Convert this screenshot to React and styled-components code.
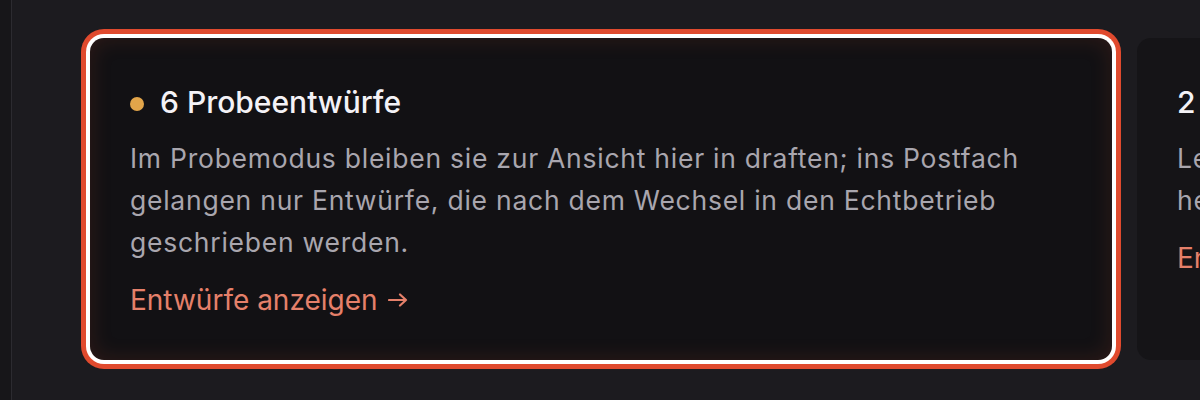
import React from "react";
import styled, { createGlobalStyle } from "styled-components";

const GlobalStyle = createGlobalStyle`
  html, body {
    margin: 0;
    padding: 0;
    background: #1c1b1f;
    font-family: Inter, "Noto Sans", "Liberation Sans", sans-serif;
    -webkit-font-smoothing: antialiased;
  }
  #root {
    height: 400px;
    overflow: hidden;
  }
`;

const Shell = styled.div`
  display: flex;
  height: 400px;
  overflow: hidden;
`;

const Rail = styled.div`
  flex: 0 0 11px;
  background: #171619;
  border-right: 1px solid #2c2b30;
`;

const Main = styled.main`
  flex: 1;
  min-width: 0;
  padding: 38px 0 0 78px;
`;

const CardRow = styled.div`
  display: flex;
  gap: 25px;
  align-items: flex-start;
`;

const Card = styled.section`
  flex: 0 0 1022px;
  box-sizing: border-box;
  height: 322px;
  padding: 46px 40px 0;
  border-radius: 14px;
  background: ${(p) => (p.$focused ? "#121114" : "#151417")};
  box-shadow: ${(p) =>
    p.$focused
      ? "inset 0 0 22px rgba(214, 78, 46, 0.16), 0 0 0 4px #ffffff, 0 0 0 9px #e04a2e"
      : "none"};
`;

const Title = styled.h3`
  display: flex;
  align-items: center;
  gap: 16px;
  margin: 0;
  font-size: 30px;
  line-height: 36px;
  font-weight: 500;
  color: #f4f2f6;
`;

const Dot = styled.span`
  flex: 0 0 14px;
  width: 14px;
  height: 14px;
  border-radius: 50%;
  background: ${(p) => p.$color};
  margin-top: 3px;
`;

const Body = styled.p`
  max-width: 920px;
  margin: 17px 0 0;
  font-size: 26.5px;
  line-height: 42px;
  letter-spacing: 0.75px;
  color: #a9a6ae;
`;

const Link = styled.a`
  display: inline-flex;
  align-items: center;
  gap: 10px;
  margin-top: 16px;
  font-size: 28px;
  line-height: 42px;
  color: #e5806a;
  text-decoration: none;
  cursor: pointer;
`;

const Arrow = () => (
  <svg width="20" height="14" viewBox="0 0 20 14" fill="none" aria-hidden="true">
    <path
      d="M1 7h17M12 1.5 18 7l-6 5.5"
      stroke="currentColor"
      strokeWidth="2.2"
      strokeLinecap="round"
      strokeLinejoin="round"
    />
  </svg>
);

export default function App() {
  return (
    <>
      <GlobalStyle />
      <Shell>
        <Rail />
        <Main>
          <CardRow>
            <Card $focused>
              <Title>
                <Dot $color="#e2a54a" />
                6 Probeentwürfe
              </Title>
              <Body>
                Im Probemodus bleiben sie zur Ansicht hier in draften; ins Postfach
                gelangen nur Entwürfe, die nach dem Wechsel in den Echtbetrieb
                geschrieben werden.
              </Body>
              <Link>
                Entwürfe anzeigen
                <Arrow />
              </Link>
            </Card>
            <Card>
              <Title>2 Entwürfe</Title>
              <Body>
                Letzte
                <br />
                heute
              </Body>
              <Link>
                Entwürfe öffnen
                <Arrow />
              </Link>
            </Card>
          </CardRow>
        </Main>
      </Shell>
    </>
  );
}
